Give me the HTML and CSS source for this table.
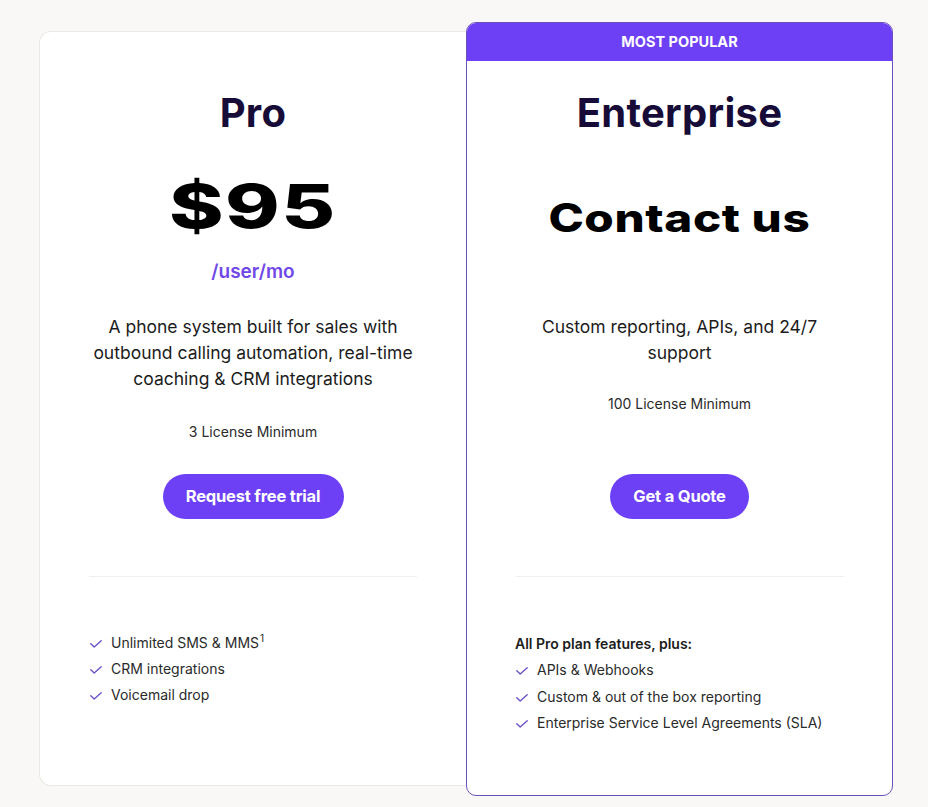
FILE: index.html
```html
<!DOCTYPE html>
<html>
<head>
<meta charset="utf-8">
<link rel="stylesheet" href="styles.css">
</head>
<body>
<div class="plans">
  <section class="card card-pro">
    <h2 class="title">Pro</h2>
    <div class="price"><span class="wide">$95</span></div>
    <div class="per">/user/mo</div>
    <p class="desc">A phone system built for sales with outbound calling automation, real-time coaching &amp; CRM integrations</p>
    <p class="min">3 License Minimum</p>
    <div class="cta"><a class="btn btn-pro">Request free trial</a></div>
    <hr class="divider">
    <ul class="features">
      <li><svg class="check" viewBox="0 0 12 8"><path d="M0.8 3.8 L4.2 7 L11.2 0.8"/></svg>Unlimited SMS &amp; MMS<sup>1</sup></li>
      <li><svg class="check" viewBox="0 0 12 8"><path d="M0.8 3.8 L4.2 7 L11.2 0.8"/></svg>CRM integrations</li>
      <li><svg class="check" viewBox="0 0 12 8"><path d="M0.8 3.8 L4.2 7 L11.2 0.8"/></svg>Voicemail drop</li>
    </ul>
  </section>
  <section class="card card-ent">
    <div class="badge">MOST POPULAR</div>
    <h2 class="title">Enterprise</h2>
    <div class="contact"><span class="wide">Contact us</span></div>
    <p class="desc desc-ent">Custom reporting, APIs, and 24/7 support</p>
    <p class="min">100 License Minimum</p>
    <div class="cta cta-ent"><a class="btn btn-ent">Get a Quote</a></div>
    <hr class="divider">
    <div class="features-head">All Pro plan features, plus:</div>
    <ul class="features">
      <li><svg class="check" viewBox="0 0 12 8"><path d="M0.8 3.8 L4.2 7 L11.2 0.8"/></svg>APIs &amp; Webhooks</li>
      <li><svg class="check" viewBox="0 0 12 8"><path d="M0.8 3.8 L4.2 7 L11.2 0.8"/></svg>Custom &amp; out of the box reporting</li>
      <li><svg class="check" viewBox="0 0 12 8"><path d="M0.8 3.8 L4.2 7 L11.2 0.8"/></svg>Enterprise Service Level Agreements (SLA)</li>
    </ul>
  </section>
</div>
</body>
</html>
```

FILE: styles.css
```css
html, body {
  margin: 0;
  padding: 0;
  background: #f9f8f6;
  font-family: Inter, "Liberation Sans", sans-serif;
  color: #1c1c1c;
}
.plans {
  display: flex;
  align-items: flex-start;
  padding: 31px 0 0 39px;
}
.card {
  box-sizing: border-box;
  width: 427px;
  background: #fff;
  text-align: center;
}
.card-pro {
  height: 755px;
  border: 1px solid #ebe8e3;
  border-right: none;
  border-radius: 12px 0 0 12px;
  padding: 58px 49px 0 49px;
}
.card-ent {
  height: 774px;
  margin-top: -9px;
  border: 1px solid #6a52bd;
  border-radius: 10px;
  overflow: hidden;
  padding: 0 48px 0 48px;
}
.badge {
  margin: 0 -48px;
  height: 38px;
  background: #6d40f5;
  color: #fff;
  font-weight: 700;
  font-size: 14.5px;
  line-height: 38px;
}
.title {
  margin: 0;
  font-size: 40px;
  line-height: 46px;
  font-weight: 700;
  color: #170c38;
  letter-spacing: 0.3px;
}
.card-ent .title {
  margin-top: 29px;
}
.wide {
  display: inline-block;
}
.price {
  margin-top: 35px;
  height: 70px;
  font-weight: 800;
  font-size: 60px;
  line-height: 70px;
  color: #000;
}
.price .wide {
  transform: scaleX(1.38);
  letter-spacing: 1px;
}
.contact {
  margin-top: 57px;
  height: 50px;
  font-weight: 800;
  font-size: 39px;
  line-height: 50px;
  color: #000;
}
.contact .wide {
  transform: scaleX(1.22);
  letter-spacing: 0.5px;
}
.per {
  margin-top: 19px;
  font-size: 19px;
  line-height: 24px;
  font-weight: 600;
  color: #7048e8;
}
.desc {
  margin: 30px 0 0;
  font-size: 17.5px;
  line-height: 26px;
  color: #1c1c1c;
}
.desc-ent {
  margin: 71px 20px 0;
}
.min {
  margin: 30px 0 0;
  font-size: 14px;
  line-height: 20px;
  color: #2a2a2a;
}
.card-ent .min {
  margin-top: 28px;
}
.cta {
  margin-top: 32px;
}
.cta-ent {
  margin-top: 60px;
}
.btn {
  display: inline-block;
  height: 45px;
  line-height: 45px;
  border-radius: 23px;
  background: #6d40f5;
  color: #fff;
  font-weight: 700;
  font-size: 16.5px;
  letter-spacing: -0.2px;
}
.btn-pro {
  width: 181px;
}
.btn-ent {
  width: 139px;
}
.divider {
  margin: 57px 0 0;
  border: none;
  border-top: 1px solid #f1efec;
  height: 0;
}
.card-ent .divider {
  margin-left: 1px;
  margin-right: 0;
}
.features-head {
  margin-top: 54px;
  text-align: left;
  font-size: 14px;
  line-height: 26px;
  font-weight: 600;
  color: #1c1c1c;
}
.features {
  list-style: none;
  margin: 53px 0 0;
  padding: 0;
  text-align: left;
}
.features-head + .features {
  margin-top: 0;
}
.features li {
  display: flex;
  align-items: center;
  font-size: 14px;
  line-height: 26px;
  color: #2a2a2a;
}
.card-ent .features li {
  line-height: 26.5px;
}
.check {
  width: 12px;
  height: 8px;
  flex: none;
  margin: 2px 9px 0 1px;
  fill: none;
  stroke: #6e52c8;
  stroke-width: 1.4;
  stroke-linecap: round;
  stroke-linejoin: round;
}
sup {
  font-size: 10px;
  line-height: 0;
  align-self: flex-start;
  margin-top: 8px;
  margin-left: 1px;
}
```
